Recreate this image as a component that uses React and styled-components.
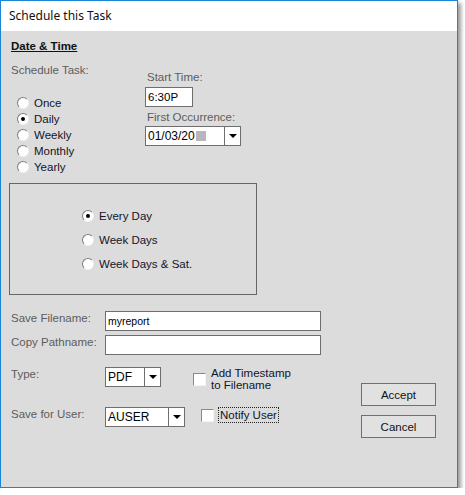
import React from "react";
import styled, { createGlobalStyle } from "styled-components";

const GlobalStyle = createGlobalStyle`
  html, body {
    margin: 0;
    padding: 0;
    background: #ffffff;
  }
  body {
    font-family: "Liberation Sans", Arial, sans-serif;
    font-size: 11.5px;
    color: #1c1c28;
  }
`;

const Window = styled.div`
  width: 458px;
  height: 488px;
  box-sizing: border-box;
  border: 1px solid #1a84d6;
  box-shadow: 3px 3px 4px rgba(0, 0, 0, 0.4);
  display: flex;
  flex-direction: column;
  background: #dcdcdc;
`;

const TitleBar = styled.div`
  height: 30px;
  flex: none;
  background: #ffffff;
  display: flex;
  align-items: center;
  padding-left: 8px;
  padding-bottom: 1px;
  box-sizing: border-box;
  font-family: "Noto Sans", "Open Sans", sans-serif;
  font-size: 12px;
  color: #111;
`;

const Body = styled.div`
  flex: 1;
  display: flex;
  flex-direction: column;
  padding-left: 8px;
`;

const SectionTitle = styled.div`
  margin: 8px 0 0 2px;
  line-height: 14px;
  font-weight: bold;
  font-size: 11.5px;
  color: #111;
  text-decoration: underline;
  text-underline-offset: 1px;
`;

const TopRow = styled.div`
  display: flex;
  align-items: flex-start;
  margin-top: 10px;
`;

const LeftCol = styled.div`
  width: 136px;
  display: flex;
  flex-direction: column;
`;

const RightCol = styled.div`
  display: flex;
  flex-direction: column;
  align-items: flex-start;
  margin-top: 7px;
`;

const Label = styled.div`
  line-height: 14px;
  color: #5c5c5c;
  padding-left: 2px;
  margin-top: ${(p) => p.$top || 0}px;
  white-space: nowrap;
`;

const RadioList = styled.div`
  display: flex;
  flex-direction: column;
  gap: ${(p) => p.$gap || 0}px;
  margin-top: ${(p) => p.$top || 0}px;
  padding-left: ${(p) => p.$left || 0}px;
`;

const RadioRow = styled.div`
  display: flex;
  align-items: center;
  height: 16px;
`;

const RadioDot = styled.span`
  width: 12px;
  height: 12px;
  box-sizing: border-box;
  border-radius: 50%;
  border: 1px solid;
  border-color: #7e7e7e #f2f2f2 #f2f2f2 #7e7e7e;
  background: #ffffff;
  margin-right: 5px;
  display: flex;
  align-items: center;
  justify-content: center;
  &::after {
    content: "";
    width: 4px;
    height: 4px;
    border-radius: 50%;
    background: ${(p) => (p.$checked ? "#000" : "transparent")};
  }
`;

const RadioText = styled.span`
  line-height: 14px;
  color: #14142a;
`;

const TextBox = styled.div`
  width: ${(p) => p.$width}px;
  height: 20px;
  box-sizing: border-box;
  border: 1px solid #6e6e6e;
  background: #ffffff;
  margin-top: ${(p) => p.$top || 0}px;
  padding-left: 2px;
  line-height: 18px;
  font-size: ${(p) => p.$size || 12}px;
  color: #000;
`;

const Combo = styled.div`
  width: ${(p) => p.$width}px;
  height: 20px;
  box-sizing: border-box;
  border: 1px solid #6e6e6e;
  background: #ffffff;
  display: flex;
  margin-top: ${(p) => p.$top || 0}px;
  flex: none;
`;

const ComboValue = styled.div`
  flex: 1;
  padding-left: 2px;
  line-height: 18px;
  font-size: 12px;
  color: #000;
  display: flex;
  align-items: center;
`;

const Redacted = styled.span`
  width: 10px;
  height: 10px;
  background: #b8b6ba;
  margin-left: 1px;
`;

const ComboButton = styled.div`
  width: 15px;
  border-left: 1px solid #6e6e6e;
  display: flex;
  align-items: center;
  justify-content: center;
  &::after {
    content: "";
    border-left: 4px solid transparent;
    border-right: 4px solid transparent;
    border-top: 4px solid #000;
  }
`;

const GroupBox = styled.div`
  width: 248px;
  height: 112px;
  box-sizing: border-box;
  border: 1px solid #666666;
  margin-top: 8px;
  padding: 24px 0 0 72px;
`;

const FormRow = styled.div`
  display: flex;
  align-items: flex-start;
  margin-top: ${(p) => p.$top || 0}px;
`;

const RowLabel = styled.div`
  width: 94px;
  padding-left: 2px;
  line-height: 14px;
  color: #5c5c5c;
  flex: none;
`;

const BottomRow = styled.div`
  display: flex;
  align-items: flex-start;
  margin-top: 12px;
`;

const BottomLeft = styled.div`
  display: flex;
  flex-direction: column;
`;

const CheckRow = styled.div`
  display: flex;
  align-items: center;
  margin-left: ${(p) => p.$left}px;
`;

const CheckBox = styled.span`
  width: 13px;
  height: 13px;
  box-sizing: border-box;
  border: 1px solid;
  border-color: #8a8a8a #f4f4f4 #f4f4f4 #8a8a8a;
  background: #ffffff;
  margin-right: ${(p) => p.$gap}px;
  flex: none;
`;

const CheckText = styled.span`
  line-height: 12px;
  color: #14142a;
  ${(p) =>
    p.$focus &&
    `
    padding: 1px;
    border: 1px dotted #222;
    margin-left: -2px;
  `}
`;

const ButtonCol = styled.div`
  margin: 16px 21px 0 auto;
  display: flex;
  flex-direction: column;
  gap: 9px;
`;

const Button = styled.button`
  width: 75px;
  height: 23px;
  box-sizing: border-box;
  border: 1px solid #707070;
  background: #e1e1e1;
  font-family: "Liberation Sans", Arial, sans-serif;
  font-size: 11.5px;
  color: #111;
  padding: 0;
  padding-top: 1px;
  outline: none;
`;

const Radio = ({ label, checked }) => (
  <RadioRow>
    <RadioDot $checked={checked} />
    <RadioText>{label}</RadioText>
  </RadioRow>
);

const App = () => {
  const schedule = ["Once", "Daily", "Weekly", "Monthly", "Yearly"];
  const days = ["Every Day", "Week Days", "Week Days & Sat."];

  return (
    <>
      <GlobalStyle />
      <Window>
        <TitleBar>Schedule this Task</TitleBar>
        <Body>
          <SectionTitle>Date &amp; Time</SectionTitle>
          <TopRow>
            <LeftCol>
              <Label>Schedule Task:</Label>
              <RadioList $top={18} $left={8}>
                {schedule.map((s) => (
                  <Radio key={s} label={s} checked={s === "Daily"} />
                ))}
              </RadioList>
            </LeftCol>
            <RightCol>
              <Label>Start Time:</Label>
              <TextBox $width={48} $top={3} $size={11.5}>
                6:30P
              </TextBox>
              <Label $top={3}>First Occurrence:</Label>
              <Combo $width={96} $top={2}>
                <ComboValue>
                  01/03/20
                  <Redacted />
                </ComboValue>
                <ComboButton />
              </Combo>
            </RightCol>
          </TopRow>

          <GroupBox>
            <RadioList $gap={8}>
              {days.map((d) => (
                <Radio key={d} label={d} checked={d === "Every Day"} />
              ))}
            </RadioList>
          </GroupBox>

          <FormRow $top={16}>
            <RowLabel>Save Filename:</RowLabel>
            <TextBox $width={216} $size={10.5}>
              myreport
            </TextBox>
          </FormRow>
          <FormRow $top={4}>
            <RowLabel>Copy Pathname:</RowLabel>
            <TextBox $width={216} />
          </FormRow>

          <BottomRow>
            <BottomLeft>
              <FormRow>
                <RowLabel>Type:</RowLabel>
                <Combo $width={56}>
                  <ComboValue>PDF</ComboValue>
                  <ComboButton />
                </Combo>
                <CheckRow $left={32}>
                  <CheckBox $gap={5} />
                  <CheckText>
                    Add Timestamp
                    <br />
                    to Filename
                  </CheckText>
                </CheckRow>
              </FormRow>
              <FormRow $top={16}>
                <RowLabel>Save for User:</RowLabel>
                <Combo $width={80}>
                  <ComboValue>AUSER</ComboValue>
                  <ComboButton />
                </Combo>
                <CheckRow $left={16}>
                  <CheckBox $gap={6} />
                  <CheckText $focus>Notify User</CheckText>
                </CheckRow>
              </FormRow>
            </BottomLeft>
            <ButtonCol>
              <Button>Accept</Button>
              <Button>Cancel</Button>
            </ButtonCol>
          </BottomRow>
        </Body>
      </Window>
    </>
  );
};

export default App;
